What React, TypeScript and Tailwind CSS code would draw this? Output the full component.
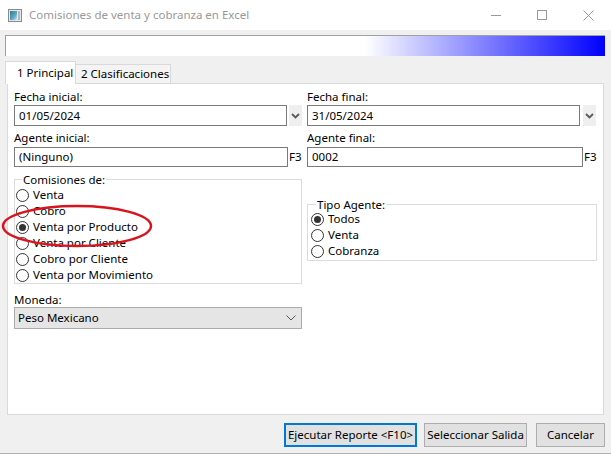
import React from "react";

function Radio({ label, checked }: { label: string; checked?: boolean }) {
  return (
    <div className="flex items-center h-[16px]">
      <span className="w-[13px] h-[13px] rounded-full border border-[#333333] bg-white flex items-center justify-center shrink-0">
        {checked && <span className="w-[7px] h-[7px] rounded-full bg-[#333333]" />}
      </span>
      <span className="ml-[4px] leading-[16px] whitespace-nowrap">{label}</span>
    </div>
  );
}

function Chevron() {
  return (
    <svg width="9" height="6" viewBox="0 0 9 6">
      <path d="M1 1 L4.5 4.5 L8 1" fill="none" stroke="#5a5a5a" strokeWidth="1.8" />
    </svg>
  );
}

function DateInput({ value, side }: { value: string; side: string }) {
  return (
    <div className="flex h-[21px]">
      <div className="flex-1 border border-[#7a7a7a] bg-white pl-[4px] flex items-center">{value}</div>
      <div className={`${side} flex justify-end`}>
        <div className="w-[13px] h-full bg-[#efefef] flex items-center justify-center">
          <Chevron />
        </div>
      </div>
    </div>
  );
}

function F3Input({ value }: { value: string }) {
  return (
    <div className="flex h-[20px]">
      <div className="flex-1 border border-[#7a7a7a] bg-white pl-[4px] flex items-center">{value}</div>
      <div className="w-[14px] flex items-center pl-[1px]">F3</div>
    </div>
  );
}

export default function App() {
  return (
    <div
      className="relative w-[611px] h-[454px] bg-[#f0f0f0] border-b border-[#b0b0b0] text-[11.5px] text-black overflow-hidden whitespace-nowrap"
      style={{ fontFamily: '"Noto Sans", "Open Sans", sans-serif' }}
    >
      {/* Title bar */}
      <div className="h-[30px] bg-white flex items-center">
        <svg className="ml-[8px]" width="14" height="13" viewBox="0 0 14 13">
          <defs>
            <linearGradient id="ig" x1="0" y1="0" x2="1" y2="1">
              <stop offset="0" stopColor="#2f7f86" />
              <stop offset="0.6" stopColor="#5fa6c9" />
              <stop offset="1" stopColor="#d8e8f0" />
            </linearGradient>
          </defs>
          <rect x="0.5" y="0.5" width="13" height="12" fill="#e8e8e8" stroke="#8a8a8a" />
          <rect x="2" y="2" width="7" height="9" fill="url(#ig)" />
          <rect x="10" y="2" width="2" height="9" fill="#b8b8b8" />
        </svg>
        <span className="ml-[7px] text-[#999999]">Comisiones de venta y cobranza en Excel</span>
        <div className="ml-auto flex items-center h-full">
          <div className="w-[46px] flex justify-center">
            <div className="w-[10px] h-[1px] bg-[#9a9a9a]" />
          </div>
          <div className="w-[46px] flex justify-center">
            <div className="w-[10px] h-[10px] border border-[#9a9a9a]" />
          </div>
          <div className="w-[46px] flex justify-center">
            <svg width="11" height="11" viewBox="0 0 11 11">
              <path d="M0.5 0.5 L10.5 10.5 M10.5 0.5 L0.5 10.5" stroke="#9a9a9a" strokeWidth="1" />
            </svg>
          </div>
        </div>
      </div>

      {/* Progress bar */}
      <div className="mt-[5px] ml-[5px] w-[600px] h-[21px] border-t border-l border-[#a0a0a0] bg-[linear-gradient(to_right,#ffffff_60%,#0000ff_100%)]" />

      {/* Tabs */}
      <div className="mt-[5px] ml-[5px] flex items-end h-[22px] relative z-10">
        <div className="w-[71px] h-[23px] bg-white border-t border-l border-r border-[#d9d9d9] flex items-center pl-[11px] translate-y-[1px]">
          1 Principal
        </div>
        <div className="w-[95px] h-[19px] bg-[#f4f4f4] border-t border-r border-[#d9d9d9] flex items-center pl-[5px]">
          2 Clasificaciones
        </div>
      </div>

      {/* Panel */}
      <div className="ml-[7px] w-[597px] h-[332px] bg-white border border-[#d9d9d9] flex gap-[5px] pl-[6px]">
        {/* Left column */}
        <div className="w-[288px] flex flex-col">
          <div className="mt-[6px] leading-[14px] h-[14px]">Fecha inicial:</div>
          <div className="mt-[1px]">
            <DateInput value="01/05/2024" side="w-[15px]" />
          </div>
          <div className="mt-[5px] leading-[14px] h-[14px]">Agente inicial:</div>
          <div className="mt-[2px]">
            <F3Input value="(Ninguno)" />
          </div>
          <div className="mt-[12px] relative border border-[#dcdcdc] pt-[7px] pl-[1px]">
            <span className="absolute -top-[7px] left-[7px] bg-white px-[1px] leading-[13px]">Comisiones de:</span>
            <Radio label="Venta" />
            <Radio label="Cobro" />
            <Radio label="Venta por Producto" checked />
            <Radio label="Venta por Cliente" />
            <Radio label="Cobro por Cliente" />
            <Radio label="Venta por Movimiento" />
          </div>
          <div className="mt-[9px] leading-[14px] h-[14px]">Moneda:</div>
          <div className="h-[22px] bg-[#e5e5e5] border border-[#acacac] flex items-center pl-[3px] pr-[5px]">
            <span>Peso Mexicano</span>
            <svg className="ml-auto" width="10" height="6" viewBox="0 0 10 6">
              <path d="M0.5 0.5 L5 5 L9.5 0.5" fill="none" stroke="#555555" strokeWidth="1" />
            </svg>
          </div>
        </div>

        {/* Right column */}
        <div className="w-[290px] flex flex-col">
          <div className="mt-[6px] leading-[14px] h-[14px]">Fecha final:</div>
          <div className="mt-[1px]">
            <DateInput value="31/05/2024" side="w-[17px] pr-[1px]" />
          </div>
          <div className="mt-[5px] leading-[14px] h-[14px]">Agente final:</div>
          <div className="mt-[2px]">
            <F3Input value="0002" />
          </div>
          <div className="mt-[37px] relative border border-[#dcdcdc] pt-[6px] pb-[1px] pl-[3px]">
            <span className="absolute -top-[7px] left-[8px] bg-white px-[1px] leading-[13px]">Tipo Agente:</span>
            <Radio label="Todos" checked />
            <Radio label="Venta" />
            <Radio label="Cobranza" />
          </div>
        </div>
      </div>

      {/* Buttons */}
      <div className="mt-[8px] flex justify-end pr-[6px]">
        <button className="w-[133px] h-[24px] bg-[#e1e1e1] border-2 border-[#0078d7] flex items-center justify-center whitespace-nowrap">
          Ejecutar Reporte &lt;F10&gt;
        </button>
        <button className="ml-[7px] w-[103px] h-[24px] bg-[#e1e1e1] border border-[#adadad] flex items-center justify-center whitespace-nowrap">
          Seleccionar Salida
        </button>
        <button className="ml-[9px] w-[69px] h-[24px] bg-[#e1e1e1] border border-[#adadad] flex items-center justify-center whitespace-nowrap">
          Cancelar
        </button>
      </div>

      {/* Red ellipse annotation */}
      <svg className="absolute left-0 top-0 pointer-events-none" width="611" height="455">
        <ellipse cx="77" cy="226" rx="74" ry="20" fill="none" stroke="#d9141e" strokeWidth="2.5" />
      </svg>
    </div>
  );
}
